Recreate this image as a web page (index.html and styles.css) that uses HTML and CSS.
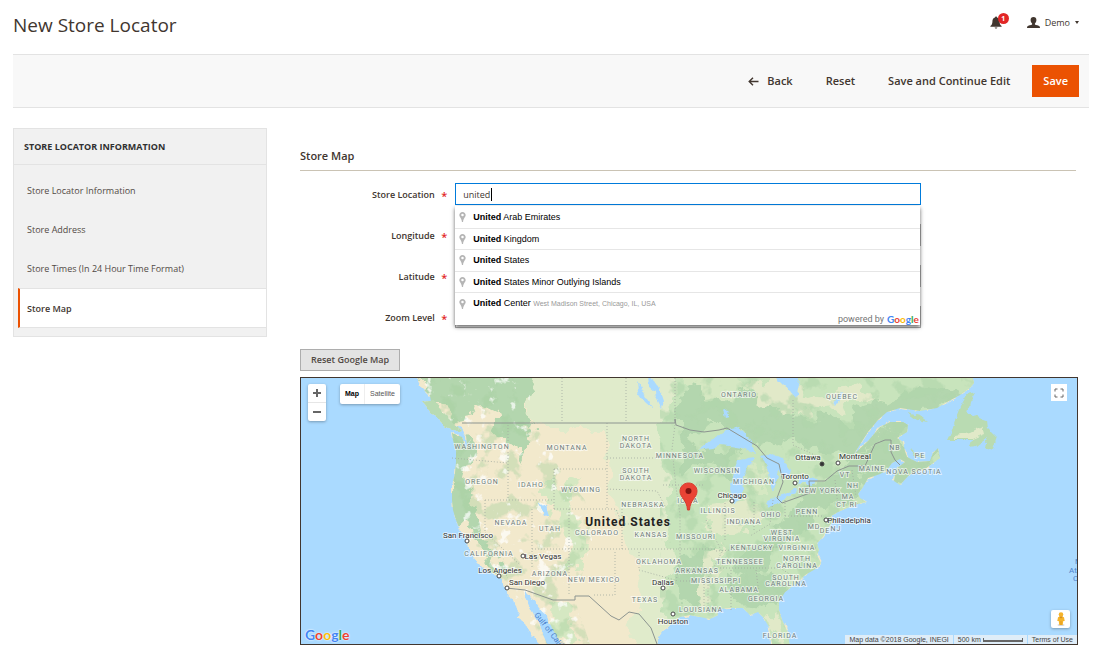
FILE: index.html
```html
<!DOCTYPE html>
<html lang="en">
<head>
<meta charset="utf-8">
<meta name="viewport" content="width=device-width, initial-scale=1">
<title>New Store Locator</title>
<link rel="stylesheet" href="styles.css">
</head>
<body>
<header class="page-header">
  <h1 class="page-title">New Store Locator</h1>
  <div class="user-tools">
    <button class="notice" type="button" aria-label="Notifications">
      <svg class="bell" viewBox="0 0 12 13" aria-hidden="true"><path d="M6 0.6c.6 0 1 .4 1 .9 1.900.5 2.600 2.100 2.600 4.200 0 2 .600 3 2 4.400v.7H.4v-.7c1.400-1.400 2-2.400 2-4.400 0-2.100.700-3.700 2.600-4.200 0-.5.400-.9 1-.9z"/><path d="M4.700 11.400h2.600c0 .7-.6 1.200-1.300 1.200s-1.300-.5-1.300-1.200z"/></svg>
      <span class="badge">1</span>
    </button>
    <button class="account" type="button">
      <svg class="person" viewBox="0 0 13 11" aria-hidden="true"><path d="M6.500 0c1.900 0 2.900 1.300 2.900 3 0 1.300-.6 2.700-1.500 3.400v1c1 .6 3.900 1 4.800 2 .2.300.3.900.3 1.600H0c0-.7.100-1.300.3-1.600.9-1 3.800-1.400 4.800-2v-1C4.200 5.700 3.600 4.300 3.600 3c0-1.700 1-3 2.900-3z"/></svg>
      <span>Demo</span>
      <svg class="caret-down" viewBox="0 0 4 3" aria-hidden="true"><path d="M0 0h4L2 3z"/></svg>
    </button>
  </div>
</header>

<div class="toolbar">
  <button class="action" type="button"><svg class="back-arrow" viewBox="0 0 11 9" aria-hidden="true"><path d="M5 .7L1.200 4.500 5 8.300M1.200 4.500H10.500"/></svg>Back</button>
  <button class="action" type="button">Reset</button>
  <button class="action" type="button">Save and Continue Edit</button>
  <button class="action primary" type="submit">Save</button>
</div>

<div class="columns">
  <nav class="side" aria-labelledby="side-title">
    <h2 class="side-title" id="side-title">STORE LOCATOR INFORMATION</h2>
    <ul class="side-list">
      <li><a class="side-link" href="#info">Store Locator Information</a></li>
      <li><a class="side-link" href="#address">Store Address</a></li>
      <li><a class="side-link" href="#times">Store Times (In 24 Hour Time Format)</a></li>
      <li><a class="side-link current" href="#map" aria-current="page">Store Map</a></li>
    </ul>
  </nav>

  <main class="main">
    <h2 class="legend">Store Map</h2>
    <form class="fields">
      <div class="field">
        <label class="label" for="location">Store Location <span class="req">*</span></label>
        <div class="control">
          <input class="text focused" id="location" type="text" value="united" autocomplete="off">
          <span class="cursor"></span>
          <div class="suggest">
            <ul class="suggest-list">
              <li class="option"><svg class="pin" viewBox="0 0 7 11"><use href="#pin"/></svg><span><b>United</b> Arab Emirates</span></li>
              <li class="option"><svg class="pin" viewBox="0 0 7 11"><use href="#pin"/></svg><span><b>United</b> Kingdom</span></li>
              <li class="option"><svg class="pin" viewBox="0 0 7 11"><use href="#pin"/></svg><span><b>United</b> States</span></li>
              <li class="option"><svg class="pin" viewBox="0 0 7 11"><use href="#pin"/></svg><span><b>United</b> States Minor Outlying Islands</span></li>
              <li class="option"><svg class="pin" viewBox="0 0 7 11"><use href="#pin"/></svg><span><b>United</b> Center <small class="detail">West Madison Street, Chicago, IL, USA</small></span></li>
            </ul>
            <div class="powered">powered by <span class="google"><i class="b">G</i><i class="r">o</i><i class="y">o</i><i class="b">g</i><i class="g">l</i><i class="r">e</i></span></div>
          </div>
        </div>
      </div>
      <div class="field"><label class="label" for="lng">Longitude <span class="req">*</span></label><div class="control"><input class="text" id="lng" type="text"></div></div>
      <div class="field"><label class="label" for="lat">Latitude <span class="req">*</span></label><div class="control"><input class="text" id="lat" type="text"></div></div>
      <div class="field"><label class="label" for="zoom">Zoom Level <span class="req">*</span></label><div class="control"><input class="text" id="zoom" type="text"></div></div>
    </form>
    <button class="reset-map" type="button">Reset Google Map</button>

    <div class="map">
      <svg class="map-art" viewBox="301 378 776 266" preserveAspectRatio="xMidYMid slice" role="img" aria-label="Map of the United States">
        <defs>
          <path id="pin" fill="#b5b5b5" fill-rule="evenodd" d="M3.500 0C5.500 0 7 1.500 7 3.400 7 5.600 4.600 6.800 4.100 11H2.900C2.400 6.800 0 5.600 0 3.400 0 1.500 1.500 0 3.500 0zM3.500 2a1.400 1.400 0 100 2.800 1.400 1.400 0 000-2.800z"/>
          <filter id="rough" x="-5%" y="-5%" width="110%" height="110%" color-interpolation-filters="sRGB"><feTurbulence type="fractalNoise" baseFrequency=".12" numOctaves="3" seed="4"/><feDisplacementMap in="SourceGraphic" scale="6" xChannelSelector="R" yChannelSelector="G"/></filter>
          <filter id="patchy" x="-10%" y="-10%" width="120%" height="120%" color-interpolation-filters="sRGB"><feTurbulence type="fractalNoise" baseFrequency=".05" numOctaves="4" seed="8"/><feDisplacementMap in="SourceGraphic" scale="32" xChannelSelector="R" yChannelSelector="G"/></filter>
          <filter id="speckle" x="0" y="0" width="100%" height="100%" color-interpolation-filters="sRGB"><feTurbulence type="fractalNoise" baseFrequency=".08" numOctaves="4" seed="13"/><feColorMatrix result="mask" values="0 0 0 0 1  0 0 0 0 1  0 0 0 0 1  9 0 0 0 -5.600"/><feComposite in="SourceGraphic" in2="mask" operator="in"/></filter>
          <filter id="speckle-wide" x="0" y="0" width="100%" height="100%" color-interpolation-filters="sRGB"><feTurbulence type="fractalNoise" baseFrequency=".05" numOctaves="4" seed="31"/><feColorMatrix result="mask" values="0 0 0 0 1  0 0 0 0 1  0 0 0 0 1  0 9 0 0 -4.900"/><feComposite in="SourceGraphic" in2="mask" operator="in"/></filter>
          <clipPath id="land-clip"><path id="land" d="M415 374L422 388 430 396 432 407 440 416 452 424 461 428 466 436 467 444 472 438 466 448 462 437 452 433 453 440 456 450 456 462 455 473 452 487 452 500 453 510 456 520 460 530 467 540 468 550 477 562 483 568 490 572 497 575 502 580 505 588 510 597 518 610 517 618 525 623 530 633 537 640 542 648H549L546 640 538 623 532 612 525 597V591L531 597 538 607 547 617 553 630 564 648H657L658 637 663 630 673 623 680 617 690 615 700 617 710 619 718 615 717 609 730 608 743 608 750 615 758 612 763 617 769 627 770 633 773 648H790L788 633 782 620 779 610V602L785 592 797 583 805 575 817 568 821 563 817 555 819 550 817 543 823 537 828 528 833 520 831 516 838 512 847 508 858 504 866 502 860 498 858 494 863 487 868 478 880 474 887 470 892 463 900 459 905 462 896 469 894 481 900 485 910 474 925 469 940 458 938 448 933 453 930 461 917 462 907 457 905 451 903 442 897 438 907 432 908 425 903 422 890 422 880 427 868 441 854 454 868 432 878 420 887 412 900 408 920 411 937 408 947 402 960 395 970 388 974 383 972 374z"/></clipPath>
          <clipPath id="rockies"><path d="M418 378H512L530 395 528 415 545 440 560 470 585 500 592 540 575 600 590 644H540L470 540 452 480 450 430z"/></clipPath>
        </defs>
        <rect class="sea" x="290" y="370" width="800" height="290"/>
        <g class="land" filter="url(#rough)">
          <use href="#land"/>
          <path d="M423 402L433 400 441 410 451 420 460 430 455 432 445 426 433 414z"/>
        </g>
        <g clip-path="url(#land-clip)">
          <g filter="url(#patchy)">
            <path class="plain" d="M530 360H700V670H635L628 620 640 600 637 560 610 500 604 425H530z"/>
            <path class="plain" d="M545 425L565 395 610 390 600 360 520 360z"/>
            <path class="east" d="M678 360H1000V660H680L665 600 676 560 670 500 660 440z"/>
            <path class="forest" d="M405 350H515L532 390 528 415 535 440 522 465 505 440 492 410 470 400 462 424 430 400z"/>
            <path class="forest" d="M448 428L468 436 474 455 467 478 470 500 480 530 500 562 508 580 490 560 475 545 464 525 450 530z"/>
            <path class="forest" d="M680 400L705 378 760 400 790 415 850 420 880 400 925 385 960 395 890 430 845 460 790 440 765 450 740 425 700 425 680 440z"/>
            <path class="forest" d="M680 420L700 450 738 450 730 475 700 468 685 480z"/>
            <path class="forest" d="M850 460L890 430 905 445 940 445 930 475 890 485 860 480 855 500 820 510 800 530 772 560 745 580 735 560 770 545 790 510 810 490z"/>
            <path class="forest" d="M680 560L706 545 720 560 704 580 712 600 685 610 675 585zM728 575L770 570 790 590 772 606 735 604z"/>
            <path class="pale" d="M745 388L790 365 805 400 850 385 880 400 840 408 790 414 760 405zM705 505L755 500 762 520 725 533 706 520zM703 560L722 545 710 600 700 610zM771 612L784 622 787 644 775 640z"/>
            <path class="mid" d="M545 470L560 490 580 478 572 505 590 550 572 570 565 525 545 505zM548 600L566 610 580 640 565 645 550 625z"/>
            <path class="mid" d="M690 370L735 378 745 392 710 402 690 390zM740 455L770 470 765 490 745 490z"/>
          </g>
          <rect class="leaves" x="660" y="378" width="320" height="266" filter="url(#speckle-wide)"/>
          <g clip-path="url(#rockies)">
            <rect class="hills" x="410" y="378" width="190" height="266" filter="url(#speckle-wide)"/>
            <rect class="snow" x="410" y="378" width="190" height="266" filter="url(#speckle)"/>
          </g>
        </g>
        <g class="land green" filter="url(#rough)">
          <path d="M423 402L433 400 441 410 451 420 460 430 455 432 445 426 433 414z"/>
          <path d="M967 395L976 393 970 403 968 413 978 417 987 420 988 429 997 438 993 450 985 447 987 438 977 446 970 447 972 440 947 440 952 430 955 420 960 407z"/>
          <path d="M908 413L920 416 928 422 917 420zM910 448l8 6 8 1-1 3-10-2z"/>
        </g>
        <path class="pale" d="M955 435l15-3 12-6 2 8-12 5h-17z" filter="url(#rough)"/>
        <g class="sea" filter="url(#rough)">
          <path d="M699 450L713 438 727 430 740 427 746 433 750 440 755 453 742 448 730 446 720 445 712 448z"/>
          <path d="M734 473L738 462 747 458 756 457 748 466 743 477 744 490 739 501 733 503 730 490z"/>
          <path d="M760 457L773 453 783 458 790 470 788 478 779 472 776 483 772 492 770 480 768 467z"/>
          <path d="M765 502L777 498 787 493 797 489 795 493 780 502 768 506zM797 484L803 478 813 476 818 480 810 484z"/>
          <path d="M772 374H801L799 385 796 398 790 391 783 385zM637 381l5 8 5 10 6 10-8-7-7-10zM647 376l8 6 6 9 3 9-2 9-4-8-3-9-7-6z"/>
          <path d="M723 408l4 3 2 7-4 1zM835 405l3-9 4-4-3 11zM539 502l6 4 3 9-4 1z"/>
        </g>
        <g class="state">
          <path d="M562 378v45M626 378v45M675 378v45M793 400v45l28 13M607 423v85M607 458h57M607 489l50 2 8 15M554 469h53M554 469v40M554 509h62l6 15h50M508 425v75M452 458l56 5M485 500h69M485 500v32l35 33M532 509v60M569 509v86M532 549h146M622 509v40M615 552v43h-22M639 552v18l36 10M675 425l-3 24 4 38 4 27v44l-4 24M663 485h42M678 549h37M680 581h24v28M706 520l10 20 6 12-14 26v30M731 570v40M756 570l4 32M725 503v37M754 502v30M716 551l60-4 40 1M720 568h60l22 14M773 500l-3 24-20 12M785 516h38M785 500v16M835 480l3 26M852 470l4 26"/>
        </g>
        <g class="border">
          <path d="M462 423H675v-4l1 6 14 5 14 2 15-2 8-2 30 18 10 12 12 6 4 18-6 16 5 5 28-10-1-12h16l12-10 12-5h16l10-22 10-4h6v12l4 8 5 5M506 588l19 2 28 10h22v-4h14l22 20 8 4 10-8 10 2 12 14 6 16"/>
        </g>
        <g class="region">
          <text x="482" y="449">WASHINGTON</text><text x="567" y="450">MONTANA</text><text x="636" y="441">NORTH</text><text x="636" y="448">DAKOTA</text>
          <text x="482" y="484">OREGON</text><text x="531" y="487">IDAHO</text><text x="581" y="492">WYOMING</text><text x="636" y="473">SOUTH</text><text x="636" y="480">DAKOTA</text>
          <text x="680" y="458">MINNESOTA</text><text x="643" y="507">NEBRASKA</text><text x="717" y="473">WISCONSIN</text><text x="754" y="484">MICHIGAN</text><text x="688" y="503">IOWA</text>
          <text x="511" y="525">NEVADA</text><text x="550" y="531">UTAH</text><text x="597" y="535">COLORADO</text><text x="651" y="537">KANSAS</text><text x="696" y="539">MISSOURI</text>
          <text x="718" y="513">ILLINOIS</text><text x="744" y="524">INDIANA</text><text x="771" y="517">OHIO</text><text x="807" y="514">PENN</text><text x="820" y="493">NEW YORK</text>
          <text x="489" y="556">CALIFORNIA</text><text x="550" y="576">ARIZONA</text><text x="594" y="582">NEW MEXICO</text><text x="659" y="564">OKLAHOMA</text><text x="697" y="573">ARKANSAS</text>
          <text x="716" y="583">MISSISSIPPI</text><text x="740" y="564">TENNESSEE</text><text x="752" y="550">KENTUCKY</text><text x="782" y="535">WEST</text><text x="782" y="541">VIRGINIA</text><text x="797" y="550">VIRGINIA</text>
          <text x="797" y="561">NORTH</text><text x="797" y="568">CAROLINA</text><text x="786" y="580">SOUTH</text><text x="786" y="586">CAROLINA</text><text x="739" y="592">ALABAMA</text><text x="766" y="601">GEORGIA</text>
          <text x="645" y="602">TEXAS</text><text x="701" y="612">LOUISIANA</text><text x="780" y="638">FLORIDA</text><text x="739" y="397">ONTARIO</text><text x="842" y="399">QUEBEC</text>
          <text x="895" y="450">NB</text><text x="920" y="458">PE</text><text x="914" y="474">NOVA SCOTIA</text><text x="872" y="471">MAINE</text><text x="845" y="477">VT</text><text x="853" y="488">NH</text><text x="848" y="499">MA</text><text x="847" y="507">CT RI</text>
          <text x="814" y="529">MD</text><text x="825" y="533">DE</text><text x="836" y="531">NJ</text>
        </g>
        <g class="city">
          <text x="468" y="538">San Francisco</text><text x="543" y="559">Las Vegas</text><text x="500" y="573">Los Angeles</text><text x="527" y="585">San Diego</text>
          <text x="663" y="585">Dallas</text><text x="673" y="624">Houston</text><text x="732" y="498">Chicago</text><text x="795" y="479">Toronto</text><text x="808" y="460">Ottawa</text><text x="855" y="459">Montreal</text><text x="849" y="523">Philadelphia</text>
        </g>
        <g class="dots"><circle cx="467" cy="541" r="2"/><circle cx="523" cy="556" r="2"/><circle cx="499" cy="576" r="2"/><circle cx="507" cy="588" r="2"/><circle cx="663" cy="588" r="2"/><circle cx="673" cy="614" r="2"/><circle cx="732" cy="501" r="2"/><circle cx="795" cy="483" r="2"/><circle cx="838" cy="463" r="2"/><circle cx="826" cy="520" r="2"/><circle class="capital" cx="822" cy="464" r="2"/></g>
        <text class="country" x="628" y="526">United States</text>
        <g class="ocean"><text transform="translate(534 615) rotate(52)">Gulf of California</text><text x="1075" y="564">North</text><text x="1069" y="573">Atlantic</text><text x="1073" y="581">Ocean</text></g>
        <path class="marker" d="M688.500 483c5 0 8.500 3.700 8.500 8.300 0 6.200-7 8.700-7.500 18.700h-2c-.5-10-7.500-12.500-7.500-18.700 0-4.600 3.500-8.300 8.500-8.300z"/><circle class="marker-dot" cx="688.500" cy="491" r="3"/>
      </svg>
      <div class="zoom-box"><button class="zoom-btn" type="button" aria-label="Zoom in"><svg viewBox="0 0 8 8"><path d="M4 0v8M0 4h8"/></svg></button><button class="zoom-btn" type="button" aria-label="Zoom out"><svg viewBox="0 0 8 8"><path d="M0 4h8"/></svg></button></div>
      <div class="types"><button class="type on" type="button">Map</button><button class="type" type="button">Satellite</button></div>
      <button class="full" type="button" aria-label="Full screen"><svg viewBox="0 0 10 10"><path d="M1 3.500V1h2.500M6.500 1H9v2.500M9 6.500V9H6.500M3.500 9H1V6.500"/></svg></button>
      <button class="peg" type="button" aria-label="Street View"><svg viewBox="0 0 8 14"><ellipse cx="4" cy="13" rx="3.500" ry="1" fill="#d7d7d7"/><path fill="#f5b32b" d="M1 5.300Q4 3.700 7 5.300L7.700 9H6.300L5.700 13H2.300L1.700 9H.3z"/><circle cx="4" cy="2.500" r="2.300" fill="#f5b32b"/><path fill="#d48a16" d="M2 4.600h4L4 6.600zM3.700 9h.6v4h-.6z"/></svg></button>
      <div class="map-logo google"><i class="b">G</i><i class="r">o</i><i class="y">o</i><i class="b">g</i><i class="g">l</i><i class="r">e</i></div>
      <div class="credits"><span>Map data ©2018 Google, INEGI</span><span class="scale">500 km <i class="bar"></i></span><a href="#terms">Terms of Use</a></div>
    </div>
  </main>
</div>
</body>
</html>
```

FILE: styles.css
```css
* { box-sizing: border-box; }
body { margin: 0; padding: 0 17px 16px 13px; background: #fff; color: #41362f; font: 9px/14px "Open Sans", sans-serif; }
button, input { font: inherit; color: inherit; }
button { border: 0; background: none; padding: 0; }
h1, h2, ul { margin: 0; padding: 0; }
ul { list-style: none; }
svg { display: block; }

.page-header { display: flex; justify-content: space-between; align-items: center; height: 54px; }
.page-title { font-size: 19px; line-height: 26px; font-weight: 400; padding-bottom: 4px; }
.user-tools { display: flex; align-items: center; gap: 25px; padding: 0 10px 9px 0; }
.notice { position: relative; }
.bell { width: 12px; height: 13px; fill: #41362f; }
.badge { position: absolute; left: 8px; top: -3px; width: 11px; height: 11px; border-radius: 6px; background: #e22626; color: #fff; font-size: 7px; line-height: 11px; font-weight: 700; }
.account { display: flex; align-items: center; gap: 5px; }
.person { width: 13px; height: 11px; fill: #41362f; }
.caret-down { width: 4px; height: 3px; fill: #41362f; }

.toolbar { display: flex; justify-content: flex-end; align-items: center; gap: 11px; height: 54px; padding-right: 10px; border: solid #e3e3e3; border-width: 1px 0; background: #f8f8f8; }
.action { display: flex; align-items: center; height: 32px; padding: 0 11px; font-size: 11px; font-weight: 600; }
.action.primary { background: #eb5202; color: #fff; }
.back-arrow { width: 11px; height: 9px; margin-right: 8px; fill: none; stroke: #41362f; stroke-width: 1.400; }

.columns { display: flex; align-items: flex-start; gap: 33px; padding-top: 20px; }
.side { flex: 0 0 254px; border: 1px solid #e3e3e3; background: #f1f1f1; padding-bottom: 8px; }
.side-title { height: 36px; padding-left: 10px; border-bottom: 1px solid #e3e3e3; font-size: 9px; line-height: 35px; font-weight: 700; color: #303030; }
.side-list { padding: 6px 0 0 4px; }
.side-link { display: block; height: 39px; padding-left: 9px; line-height: 39px; color: #524a45; text-decoration: none; }
.side-link.current { height: 40px; padding-left: 7px; border: solid #e3e3e3; border-width: 1px 0 1px 2px; border-left-color: #eb5202; background: #fff; color: #41362f; font-weight: 600; }

.main { flex: 1; min-width: 0; padding: 20px 13px 0 0; }
.legend { height: 23px; margin-bottom: 12px; border-bottom: 1px solid #cac3b4; font-size: 11px; line-height: 15px; font-weight: 600; }
.fields { display: grid; gap: 19px; margin-bottom: 21px; }
.field { display: grid; grid-template-columns: 20% 60%; }
.label { height: 22px; padding-right: 8px; line-height: 24px; font-weight: 600; text-align: right; }
.req { margin-left: 4px; color: #e22626; font-size: 11px; line-height: 12px; vertical-align: -2px; }
.control { position: relative; }
.text { display: block; width: 100%; height: 22px; padding: 0 7px; border: 1px solid #adadad; border-radius: 0; background: #fff; outline: 0; }
.text.focused { border-color: #007bdb; }
.cursor { position: absolute; left: 36px; top: 5px; width: 1px; height: 13px; background: #000; }

.suggest { position: absolute; z-index: 2; left: 0; right: 1px; top: 23px; background: #fff; box-shadow: 0 2px 4px rgba(0,0,0,.6); color: #000; font: 9px/14px "Liberation Sans", Arial, sans-serif; }
.suggest-list { display: grid; grid-auto-rows: 1fr; height: 108px; }
.option { display: flex; align-items: center; gap: 7px; padding-left: 4px; border-top: 1px solid #e6e6e6; }
.option:first-child { border-top: 0; }
.pin { width: 7px; height: 10px; }
.detail { font-size: 7px; color: #999; }
.powered { display: flex; justify-content: flex-end; align-items: center; gap: 3px; height: 11px; padding-right: 1px; color: #757575; font: 9px/11px Roboto, sans-serif; }
.google { font-family: Lato, sans-serif; font-weight: 400; font-size: 10px; line-height: 11px; -webkit-text-stroke: 0; }
.google i { font-style: normal; }
.b { color: #4285f4; } .r { color: #ea4335; } .y { color: #fbbc05; } .g { color: #34a853; }
.powered .google { font-weight: 700; }

.reset-map { display: block; height: 22px; padding: 0 10px; margin-bottom: 6px; border: 1px solid #adadad; background: #e3e3e3; color: #514943; font-weight: 600; font-size: 9px; }

.map { position: relative; margin-right: -2px; border: 1px solid #41362f; overflow: hidden; }
.map-art { width: 100%; aspect-ratio: 776 / 266; font-family: Roboto, sans-serif; }
.sea { fill: #aadaff; }
.land { fill: #f2e9cc; }
.land.green { fill: #b9dbb2; }
.plain { fill: #e0ebcb; }
.east { fill: #c8e4bc; }
.forest { fill: #b3d6ae; }
.mid { fill: #d5e8c2; }
.pale { fill: #e1e9c8; }
.leaves { fill: #b0d5ab; opacity: .6; }
.hills { fill: #a5cf9f; opacity: .4; }
.snow { fill: #fff; opacity: .7; }
.state { fill: none; stroke: #a3aaa0; stroke-width: 1; stroke-dasharray: 1 2; opacity: .8; }
.border { fill: none; stroke: #8c9490; stroke-width: 1; }
.region { font-size: 7px; text-anchor: middle; fill: #6f7d7b; stroke: #fff; stroke-opacity: .6; stroke-width: 2; paint-order: stroke; letter-spacing: 1px; }
.city { font-size: 8px; text-anchor: middle; fill: #333; stroke: #fff; stroke-opacity: .6; stroke-width: 2; paint-order: stroke; }
.dots { fill: #fff; stroke: #444; stroke-width: 1; }
.capital { fill: #333; }
.country { font-size: 12px; font-weight: 700; letter-spacing: 1px; text-anchor: middle; fill: #222; }
.ocean { font-size: 8px; fill: #4f83cc; }
.marker { fill: #ea4335; stroke: #d93a2e; stroke-width: 1; }
.marker-dot { fill: #811411; }

.zoom-box, .types, .full, .peg { position: absolute; background: #fff; border-radius: 2px; box-shadow: 0 1px 3px rgba(0,0,0,.3); }
.zoom-box { left: 7px; top: 6px; width: 18px; }
.zoom-btn { display: grid; place-items: center; width: 18px; height: 18px; }
.zoom-btn + .zoom-btn { height: 19px; border-top: 1px solid #e6e6e6; }
.zoom-btn svg { width: 8px; height: 8px; stroke: #666; stroke-width: 2; }
.types { left: 39px; top: 6px; display: flex; font: 7px/20px "Liberation Sans", Arial, sans-serif; }
.type { height: 20px; padding: 0 5px; color: #565656; }
.type.on { color: #000; font-weight: 700; border-right: 1px solid #eee; }
.full { right: 10px; top: 6px; width: 16px; height: 17px; display: grid; place-items: center; border-radius: 0; box-shadow: none; }
.full svg { width: 10px; height: 10px; fill: none; stroke: #666; stroke-width: 1; }
.peg { right: 7px; bottom: 16px; width: 19px; height: 18px; display: grid; place-items: center; }
.peg svg { width: 8px; height: 14px; }
.map-logo { position: absolute; left: 4px; bottom: 1px; font-size: 14px; font-weight: 700; line-height: 16px; text-shadow: 0 0 1px #fff, 0 0 2px #fff; }
.credits { position: absolute; right: 0; bottom: 0; display: flex; gap: 1px; color: #444; font: 7px/9px "Liberation Sans", Arial, sans-serif; }
.credits > * { padding: 0 4px; background: rgba(245,245,245,.7); color: #444; text-decoration: none; }
.scale { display: flex; align-items: center; gap: 2px; }
.bar { width: 40px; height: 4px; border: solid #666; border-width: 0 1px 2px; }
```
